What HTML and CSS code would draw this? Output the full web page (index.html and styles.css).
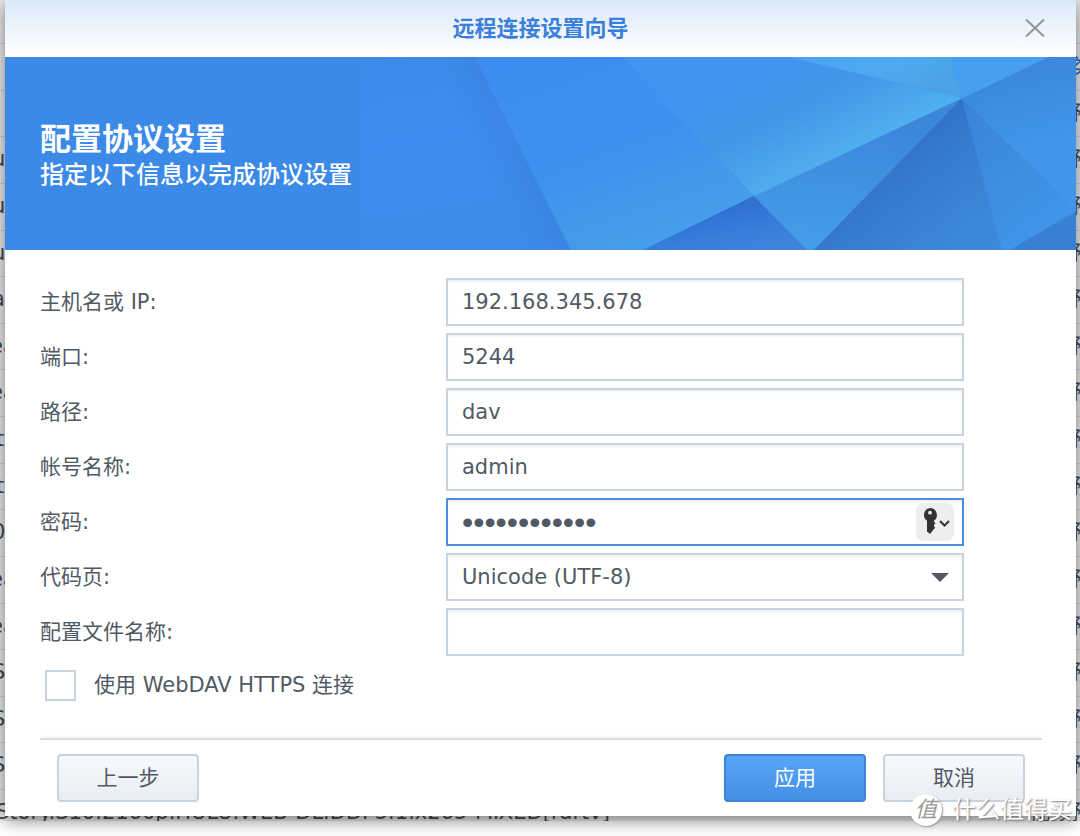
FILE: index.html
```html
<!DOCTYPE html>
<html lang="zh-CN">
  <head>
    <meta charset="UTF-8" />
    <meta name="viewport" content="width=device-width, initial-scale=1.0" />
    <title>远程连接设置向导</title>
    <link rel="stylesheet" href="styles.css" />
  </head>

  <body>
    <!-- file list behind the dialog -->
    <div class="file-list" aria-hidden="true">
      <div class="file-row"><span></span><span></span></div>
      <div class="file-row file-row--head"><span></span><span>文件类</span></div>
      <div class="file-row"><span></span><span>视频预</span></div>
      <div class="file-row"><span>u</span><span>视频预</span></div>
      <div class="file-row"><span>u</span><span>视频预</span></div>
      <div class="file-row"><span>u</span><span>视频预</span></div>
      <div class="file-row"><span>a</span><span>视频预</span></div>
      <div class="file-row file-row--wide"><span>ea</span><span>视频预</span></div>
      <div class="file-row file-row--wide"><span>ea</span><span>视频预</span></div>
      <div class="file-row file-row--narrow"><span>t</span><span>视频预</span></div>
      <div class="file-row file-row--narrow"><span>t</span><span>视频预</span></div>
      <div class="file-row"><span>0</span><span>视频预</span></div>
      <div class="file-row file-row--wide"><span>ea</span><span>视频预</span></div>
      <div class="file-row file-row--wide"><span>ea</span><span>视频预</span></div>
      <div class="file-row"><span>S</span><span>视频预</span></div>
      <div class="file-row"><span>S</span><span>视频预</span></div>
      <div class="file-row"><span>S</span><span>视频预</span></div>
      <div class="file-row file-row--narrow">
        <span>Story.S10.2160p.HULU.WEB-DL.DDP5.1.x265-MiXED[rartv]</span>
        <span>视频预</span>
      </div>
    </div>

    <main class="dialog">
      <header class="dialog-header">
        <h1 class="dialog-title">远程连接设置向导</h1>
        <button class="btn-close" type="button" aria-label="关闭">
          <svg viewBox="0 0 20 18" class="btn-close-icon">
            <path d="M1 0.5L19 17.5M19 0.5L1 17.5" />
          </svg>
        </button>
      </header>

      <section class="banner">
        <svg
          class="banner-art"
          viewBox="0 0 1071 193"
          preserveAspectRatio="xMaxYMid slice"
          aria-hidden="true"
        >
          <defs>
            <linearGradient id="g-left" x1="0" y1="0" x2="0.6" y2="1">
              <stop offset="0" stop-color="#3c8ae8" />
              <stop offset="0.35" stop-color="#3f8cf0" />
              <stop offset="1" stop-color="#3c8be2" />
            </linearGradient>
            <linearGradient id="g-edge" gradientUnits="userSpaceOnUse" x1="470" y1="96" x2="518" y2="74">
              <stop offset="0" stop-color="#3a84e2" stop-opacity="0" />
              <stop offset="1" stop-color="#3a84e2" />
            </linearGradient>
            <linearGradient id="g-mid" x1="0" y1="0" x2="0.5" y2="1">
              <stop offset="0" stop-color="#3d8cf0" />
              <stop offset="0.6" stop-color="#3f91ee" />
              <stop offset="1" stop-color="#469de9" />
            </linearGradient>
            <linearGradient id="g-bright" gradientUnits="userSpaceOnUse" x1="770" y1="0" x2="830" y2="115">
              <stop offset="0" stop-color="#4294f0" />
              <stop offset="0.45" stop-color="#4397e8" />
              <stop offset="1" stop-color="#52b3ef" />
            </linearGradient>
            <linearGradient id="g-top" x1="0" y1="0" x2="1" y2="0.4">
              <stop offset="0" stop-color="#4ca3f1" />
              <stop offset="0.6" stop-color="#4fa9f1" />
              <stop offset="1" stop-color="#4ba2e4" />
            </linearGradient>
            <linearGradient id="g-low" x1="0" y1="0" x2="0.6" y2="1">
              <stop offset="0" stop-color="#2b62c1" />
              <stop offset="0.6" stop-color="#3479d8" />
              <stop offset="1" stop-color="#3d83dc" />
            </linearGradient>
            <linearGradient id="g-wedge" x1="0.6" y1="0.2" x2="0.5" y2="1">
              <stop offset="0" stop-color="#3c87dc" />
              <stop offset="1" stop-color="#459de9" />
            </linearGradient>
            <linearGradient id="g-dark" gradientUnits="userSpaceOnUse" x1="870" y1="90" x2="950" y2="190">
              <stop offset="0" stop-color="#2f6dc2" />
              <stop offset="0.4" stop-color="#357bd0" />
              <stop offset="1" stop-color="#3d88da" />
            </linearGradient>
            <linearGradient id="g-slice" x1="0" y1="0" x2="0.6" y2="1">
              <stop offset="0" stop-color="#3a83d7" />
              <stop offset="1" stop-color="#4095ea" />
            </linearGradient>
            <linearGradient id="g-right" x1="0.4" y1="0" x2="0.6" y2="1">
              <stop offset="0" stop-color="#3a85db" />
              <stop offset="0.6" stop-color="#4195ea" />
              <stop offset="1" stop-color="#4297ed" />
            </linearGradient>
          </defs>
          <rect x="356" width="715" height="193" fill="url(#g-left)" />
          <path d="M400 0H470L566 193H470Z" fill="url(#g-edge)" />
          <path d="M470 0H617L749 139L638 193H566Z" fill="url(#g-mid)" />
          <path d="M617 0H783L957 41L749 139Z" fill="url(#g-bright)" />
          <path d="M783 0H946L957 41Z" fill="url(#g-top)" />
          <path d="M946 0H1043L957 41Z" fill="#479ff1" />
          <path d="M638 193L749 139L802 193Z" fill="url(#g-low)" />
          <path d="M749 139L957 41L809 193H802Z" fill="url(#g-wedge)" />
          <path d="M957 41L809 193H997Z" fill="url(#g-dark)" />
          <path d="M957 41L1071 153L1005 193H997Z" fill="url(#g-slice)" />
          <path d="M957 41L1043 0H1071V153Z" fill="url(#g-right)" />
          <path d="M1005 193L1071 155V193Z" fill="#3780d2" />
          <path d="M749 139L957 41L1043 0" fill="none" stroke="#55adf0" stroke-opacity="0.5" />
        </svg>
        <h2 class="banner-title">配置协议设置</h2>
        <p class="banner-text">指定以下信息以完成协议设置</p>
      </section>

      <form class="form">
        <div class="field">
          <label for="host">主机名或 IP:</label>
          <input class="input" id="host" type="text" value="192.168.345.678" />
        </div>
        <div class="field">
          <label for="port">端口:</label>
          <input class="input" id="port" type="text" value="5244" />
        </div>
        <div class="field">
          <label for="path">路径:</label>
          <input class="input" id="path" type="text" value="dav" />
        </div>
        <div class="field">
          <label for="account">帐号名称:</label>
          <input class="input" id="account" type="text" value="admin" />
        </div>
        <div class="field">
          <label for="password">密码:</label>
          <div class="control">
            <input
              class="input input--active"
              id="password"
              type="password"
              value="abcdefghijkl"
            />
            <button class="btn-key" type="button" aria-label="选择密码">
              <svg viewBox="0 0 38 38" class="btn-key-icon">
                <path
                  fill-rule="evenodd"
                  d="M14 5a7 7 0 0 1 4 12.700v1l1.500 1.500-1.500 1.800v1.200l1.200 1.500-1.600 1.800L14 31l-3-2.500V17.700A7 7 0 0 1 14 5ZM14 7.800a1.900 1.900 0 1 0 0 3.800a1.900 1.900 0 0 0 0-3.800Z"
                />
                <path class="btn-key-arrow" d="M24 18l4.500 4.500L33 18" />
              </svg>
            </button>
          </div>
        </div>
        <div class="field">
          <label for="codepage">代码页:</label>
          <div class="control">
            <select class="input" id="codepage">
              <option>Unicode (UTF-8)</option>
            </select>
            <svg viewBox="0 0 18 9" class="select-arrow">
              <path d="M0 0H18L9 9Z" />
            </svg>
          </div>
        </div>
        <div class="field">
          <label for="profile">配置文件名称:</label>
          <input class="input" id="profile" type="text" />
        </div>
        <label class="check">
          <input class="checkbox" type="checkbox" />
          使用 WebDAV HTTPS 连接
        </label>
      </form>

      <footer class="dialog-footer">
        <button class="btn" type="button">上一步</button>
        <button class="btn btn--primary" type="button">应用</button>
        <button class="btn" type="button">取消</button>
      </footer>
    </main>

    <div class="watermark">
      <span class="watermark-logo">值</span>
      <span>什么值得买</span>
    </div>
  </body>
</html>
```
FILE: styles.css
```css
/* MAIN COLOR: #3c8ae8 */
/* TEXT COLOR: #505a64 */

* {
  margin: 0;
  padding: 0;
  box-sizing: border-box;
}

body {
  position: relative;
  min-height: 100vh;
  overflow: hidden;
  padding: 0 4px 19px 5px;
  font-family: "DejaVu Sans", "Noto Sans CJK SC", sans-serif;
  font-size: 21px;
  line-height: 32px;
  color: #505a64;
  background-color: #fff;
}

button,
input,
select {
  font: inherit;
  color: inherit;
}

/* FILE LIST */
.file-list {
  position: absolute;
  inset: 0 0 15px;
  overflow: hidden;
  background-color: #ebebeb;

  display: grid;
  grid-template-rows: 44px repeat(16, 1fr) 31px;
}
.file-row {
  border-bottom: 1px solid #c9d0d6;
  line-height: 44px;
  color: #414b55;
  white-space: nowrap;

  display: flex;
  justify-content: space-between;
}
.file-row span:first-child {
  margin-left: -8px;
}
.file-row span:last-child {
  margin-right: -12px;
}
.file-row--wide span:first-child {
  margin-left: -10px;
}
.file-row--narrow span:first-child {
  margin-left: -4px;
}
.file-row:last-child {
  border-bottom: none;
}
.file-row--head {
  color: #2f6cc0;
}

/* DIALOG */
.dialog {
  position: relative;
  background-color: #fff;
  box-shadow: 0 4px 16px rgba(0, 0, 0, 0.5);
}
.dialog-header {
  position: relative;
  height: 57px;
  background: linear-gradient(#d9e9f6, #f0f5fc 55%, #fff);

  display: flex;
  align-items: center;
  justify-content: center;
}
.dialog-title {
  font-size: 22px;
  font-weight: 700;
  color: #3a80da;
}
.btn-close {
  position: absolute;
  right: 31px;
  top: 18px;
  height: 20px;
  border: none;
  background: none;
  cursor: pointer;

  display: flex;
  align-items: center;
}
.btn-close-icon {
  width: 20px;
  height: 18px;
  fill: none;
  stroke: #8f979e;
  stroke-width: 2;
}

/* BANNER */
.banner {
  position: relative;
  padding: 62px 35px 59px;
  color: #fff;
  background-color: #3c8ae8;
}
.banner-art {
  position: absolute;
  inset: 0;
  width: 100%;
  height: 100%;
}
.banner-title {
  position: relative;
  font-size: 31px;
  font-weight: 700;
  line-height: 40px;
}
.banner-text {
  position: relative;
  font-size: 24px;
  font-weight: 500;
  line-height: 32px;
}

/* FORM */
.form {
  padding: 28px 112px 37px 35px;

  display: flex;
  flex-direction: column;
  gap: 7px;
}
.field {
  display: grid;
  grid-template-columns: 406px 1fr;
  align-items: center;
}
.control {
  position: relative;
}
.input {
  display: block;
  width: 100%;
  height: 48px;
  padding: 0 14px;
  border: 2px solid #cad3dd;
  border-radius: 0;
  background-color: #fff;
  box-shadow: inset 0 2px 2px #f0f2f4;
  appearance: none;
  outline: none;
}
.input--active {
  border-color: #4a8fe3;
  padding-right: 56px;
  font-family: "Liberation Sans", sans-serif;
  font-size: 32px;
}
.btn-key {
  position: absolute;
  right: 10px;
  top: 5px;
  width: 38px;
  height: 38px;
  border: none;
  border-radius: 8px;
  background-color: #eee;
  cursor: pointer;
}
.btn-key-icon {
  display: block;
  fill: #333;
}
.btn-key-arrow {
  fill: none;
  stroke: #333;
  stroke-width: 2;
}
.select-arrow {
  position: absolute;
  right: 15px;
  top: 20px;
  width: 18px;
  height: 9px;
  fill: #505a64;
  pointer-events: none;
}
.check {
  margin-top: 6px;
  padding-left: 5px;

  display: flex;
  align-items: center;
  gap: 18px;
}
.checkbox {
  width: 31px;
  height: 31px;
  border: 2px solid #cad3dd;
  background-color: #fff;
  appearance: none;
}

/* FOOTER */
.dialog-footer {
  margin: 0 34px 0 35px;
  padding: 14px 17px;
  border-top: 2px solid #dcdcdc;
  box-shadow: 0 -3px 3px -2px #eee;

  display: flex;
  gap: 17px;
}
.btn {
  width: 142px;
  height: 48px;
  border: 2px solid #cad3dd;
  border-radius: 4px;
  background: linear-gradient(#f6f9fd, #e9edf3);
  cursor: pointer;
}
.btn--primary {
  margin-left: auto;
  border-color: #3f83d6;
  color: #fff;
  background: linear-gradient(#57a4f8, #4590e4);
}

/* WATERMARK */
.watermark {
  position: absolute;
  right: 8px;
  bottom: 10px;
  font-size: 24px;
  color: #fff;
  text-shadow: 1px 1px 2px #777;

  display: flex;
  align-items: center;
  gap: 10px;
}
.watermark-logo {
  width: 32px;
  height: 32px;
  border-radius: 50%;
  background-color: #fff;
  box-shadow: 1px 1px 2px #999;
  font-size: 22px;
  font-style: italic;
  text-align: center;
  text-shadow: none;
  color: #999;
}
```
